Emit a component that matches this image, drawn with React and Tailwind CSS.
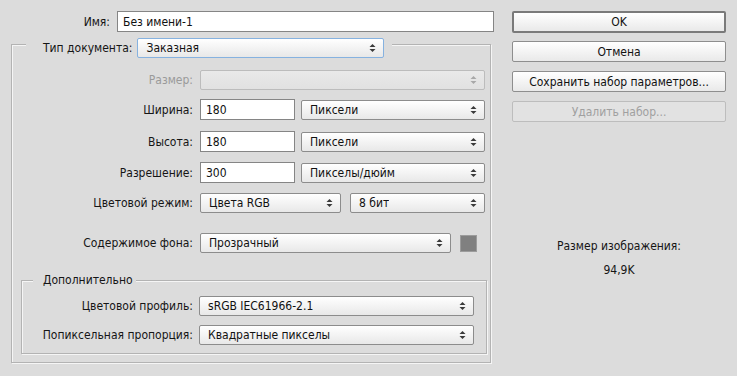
import React from "react";

const font = { fontFamily: '"DejaVu Sans Condensed", "DejaVu Sans", sans-serif' };

function Arrows({ disabled }) {
  const c = disabled ? "#a8a8a8" : "#3a3a3a";
  return (
    <svg width="7" height="10" viewBox="0 0 7 10" className="shrink-0">
      <polygon points="0.5,4 3.5,1 6.5,4" fill={c} />
      <polygon points="0.5,6 3.5,9 6.5,6" fill={c} />
    </svg>
  );
}

function Select({ value, className = "", disabled, focused }) {
  const border = focused
    ? "border-[#86b2e0]"
    : disabled
    ? "border-[#bcbcbc]"
    : "border-[#8c8c8c]";
  const bg = disabled
    ? "bg-gradient-to-b from-[#e9e9e9] to-[#e1e1e1]"
    : "bg-gradient-to-b from-[#ffffff] to-[#e8e8e8]";
  return (
    <div
      className={`flex items-center justify-between h-[20px] pl-[8px] pr-[7px] border ${border} ${bg} rounded-[2px] text-[12px] text-[#111] ${className}`}
    >
      <span className="truncate">{value}</span>
      <Arrows disabled={disabled} />
    </div>
  );
}

function Input({ value, className = "" }) {
  return (
    <div
      className={`flex items-center h-[21px] pl-[5px] bg-white border border-[#858585] text-[12px] text-[#111] ${className}`}
    >
      {value}
    </div>
  );
}

function Label({ children, className = "", muted }) {
  return (
    <div
      className={`shrink-0 text-right text-[12px] ${muted ? "text-[#9a9a9a]" : "text-[#151515]"} ${className}`}
    >
      {children}
    </div>
  );
}

function Button({ children, primary, disabled, className = "" }) {
  let style = "border border-[#8e8e8e] text-[#111] bg-gradient-to-b from-[#ffffff] to-[#e9e9e9]";
  if (primary) style = "border-2 border-[#7a7a7a] text-[#111] bg-gradient-to-b from-[#ffffff] to-[#e9e9e9]";
  if (disabled) style = "border border-[#bdbdbd] text-[#a0a0a0] bg-[#e2e2e2]";
  return (
    <div
      className={`flex items-center justify-center w-[214px] rounded-[2px] text-[12px] ${style} ${className}`}
    >
      {children}
    </div>
  );
}

const groupBox =
  "border border-[#b3b3b3] shadow-[1px_1px_0_#f5f5f5,inset_1px_1px_0_#f5f5f5]";

export default function App() {
  return (
    <div
      className="w-[737px] h-[376px] bg-[#dcdcdc] flex overflow-hidden"
      style={font}
    >
      {/* Left column */}
      <div className="w-[494px] flex flex-col">
        {/* Name */}
        <div className="flex items-center mt-[11px] h-[21px]">
          <Label className="w-[110px]">Имя:</Label>
          <Input value="Без имени-1" className="ml-[7px] w-[377px]" />
        </div>

        {/* Document group */}
        <div className={`ml-[11px] mt-[12px] w-[480px] flex flex-col ${groupBox}`}>
          <div className="flex -mt-[7px] pl-[14px] h-[20px]">
            <div className="flex items-center bg-[#dcdcdc] pl-[17px] pr-[8px]">
              <Label>Тип документа:</Label>
              <Select value="Заказная" focused className="ml-[5px] w-[247px]" />
            </div>
          </div>

          <div className="flex items-center mt-[12px] h-[20px]">
            <Label muted className="w-[181px]">Размер:</Label>
            <Select value="" disabled className="ml-[7px] w-[285px]" />
          </div>

          <div className="flex items-center mt-[9px] h-[21px]">
            <Label className="w-[181px]">Ширина:</Label>
            <Input value="180" className="ml-[7px] w-[95px]" />
            <Select value="Пиксели" className="ml-[6px] w-[184px]" />
          </div>

          <div className="flex items-center mt-[11px] h-[21px]">
            <Label className="w-[181px]">Высота:</Label>
            <Input value="180" className="ml-[7px] w-[95px]" />
            <Select value="Пиксели" className="ml-[6px] w-[184px]" />
          </div>

          <div className="flex items-center mt-[10px] h-[21px]">
            <Label className="w-[181px]">Разрешение:</Label>
            <Input value="300" className="ml-[7px] w-[95px]" />
            <Select value="Пикселы/дюйм" className="ml-[6px] w-[184px]" />
          </div>

          <div className="flex items-center mt-[10px] h-[20px]">
            <Label className="w-[181px]">Цветовой режим:</Label>
            <Select value="Цвета RGB" className="ml-[7px] w-[141px]" />
            <Select value="8 бит" className="ml-[9px] w-[135px]" />
          </div>

          <div className="flex items-center mt-[20px] h-[20px]">
            <Label className="w-[181px]">Содержимое фона:</Label>
            <Select value="Прозрачный" className="ml-[7px] w-[251px]" />
            <div className="ml-[9px] w-[17px] h-[17px] bg-[#808080] border border-[#9c9c9c]" />
          </div>

          {/* Advanced group */}
          <div className={`ml-[9px] mt-[27px] mb-[8px] w-[466px] flex flex-col ${groupBox}`}>
            <div className="flex -mt-[8px] pl-[11px] h-[15px]">
              <div className="bg-[#dcdcdc] pl-[10px] pr-[3px] leading-[15px] text-[12px] text-[#151515]">
                Дополнительно
              </div>
            </div>

            <div className="flex items-center mt-[8px] h-[20px]">
              <Label className="w-[171px]">Цветовой профиль:</Label>
              <Select value="sRGB IEC61966-2.1" className="ml-[6px] w-[275px]" />
            </div>

            <div className="flex items-center mt-[9px] mb-[8px] h-[20px]">
              <Label className="w-[171px]">Попиксельная пропорция:</Label>
              <Select value="Квадратные пикселы" className="ml-[6px] w-[275px]" />
            </div>
          </div>
        </div>
      </div>

      {/* Right column */}
      <div className="ml-[18px] w-[214px] flex flex-col">
        <Button primary className="mt-[11px] h-[22px]">OK</Button>
        <Button className="mt-[8px] h-[21px]">Отмена</Button>
        <Button className="mt-[9px] h-[21px]">Сохранить набор параметров...</Button>
        <Button disabled className="mt-[9px] h-[21px]">Удалить набор...</Button>

        <div className="mt-[117px] text-center text-[12px] leading-[15px] text-[#151515]">
          Размер изображения:
        </div>
        <div className="mt-[9px] text-center text-[12px] leading-[15px] text-[#151515]">
          94,9K
        </div>
      </div>
    </div>
  );
}
